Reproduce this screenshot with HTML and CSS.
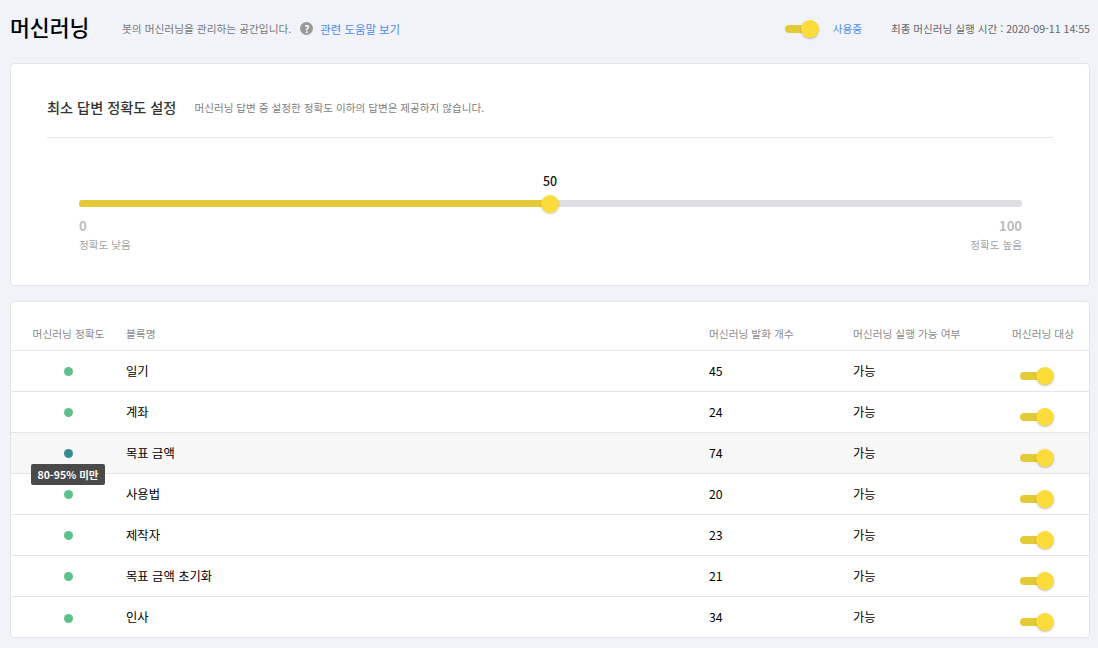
FILE: index.html
```html
<!DOCTYPE html>
<html lang="ko">
<head>
	<meta charset="UTF-8">
	<title>머신러닝</title>
	<link rel="stylesheet" href="styles.css">
</head>
<body>
	<div class="page">
		<div class="header">
			<h1 class="title">머신러닝</h1>
			<span class="desc">봇의 머신러닝을 관리하는 공간입니다.</span>
			<span class="help-icon">?</span>
			<a class="help-link">관련 도움말 보기</a>
			<div class="header-right">
				<span class="toggle"><span class="knob"></span></span>
				<a class="status">사용중</a>
				<span class="last-run">최종 머신러닝 실행 시간 : 2020-09-11 14:55</span>
			</div>
		</div>

		<div class="card setting">
			<div class="setting-head">
				<h2 class="setting-title">최소 답변 정확도 설정</h2>
				<span class="setting-desc">머신러닝 답변 중 설정한 정확도 이하의 답변은 제공하지 않습니다.</span>
			</div>
			<div class="slider-area">
				<div class="slider-value">50</div>
				<div class="slider">
					<div class="slider-fill"></div>
					<div class="slider-knob"></div>
				</div>
				<div class="slider-labels">
					<div>
						<div class="slider-num">0</div>
						<div class="slider-text">정확도 낮음</div>
					</div>
					<div class="right">
						<div class="slider-num">100</div>
						<div class="slider-text">정확도 높음</div>
					</div>
				</div>
			</div>
		</div>

		<div class="card list">
			<div class="row head">
				<div class="c-acc">머신러닝 정확도</div>
				<div>블록명</div>
				<div>머신러닝 발화 개수</div>
				<div>머신러닝 실행 가능 여부</div>
				<div class="c-target">머신러닝 대상</div>
			</div>
			<div class="row">
				<div class="c-acc"><span class="dot"></span></div>
				<div>일기</div>
				<div>45</div>
				<div>가능</div>
				<div class="c-target"><span class="toggle"><span class="knob"></span></span></div>
			</div>
			<div class="row">
				<div class="c-acc"><span class="dot"></span></div>
				<div>계좌</div>
				<div>24</div>
				<div>가능</div>
				<div class="c-target"><span class="toggle"><span class="knob"></span></span></div>
			</div>
			<div class="row hover">
				<div class="c-acc">
					<span class="dot dark"></span>
					<span class="tooltip">80-95% 미만</span>
				</div>
				<div>목표 금액</div>
				<div>74</div>
				<div>가능</div>
				<div class="c-target"><span class="toggle"><span class="knob"></span></span></div>
			</div>
			<div class="row">
				<div class="c-acc"><span class="dot"></span></div>
				<div>사용법</div>
				<div>20</div>
				<div>가능</div>
				<div class="c-target"><span class="toggle"><span class="knob"></span></span></div>
			</div>
			<div class="row">
				<div class="c-acc"><span class="dot"></span></div>
				<div>제작자</div>
				<div>23</div>
				<div>가능</div>
				<div class="c-target"><span class="toggle"><span class="knob"></span></span></div>
			</div>
			<div class="row">
				<div class="c-acc"><span class="dot"></span></div>
				<div>목표 금액 초기화</div>
				<div>21</div>
				<div>가능</div>
				<div class="c-target"><span class="toggle"><span class="knob"></span></span></div>
			</div>
			<div class="row last">
				<div class="c-acc"><span class="dot"></span></div>
				<div>인사</div>
				<div>34</div>
				<div>가능</div>
				<div class="c-target"><span class="toggle"><span class="knob"></span></span></div>
			</div>
		</div>
	</div>
</body>
</html>
```

FILE: styles.css
```css
*{
	box-sizing: border-box;
}

body{
	margin: 0;
	background-color: #f1f3f8;
	color: #1b1b1b;
	font-family: "Noto Sans CJK KR", "Noto Sans", sans-serif;
	overflow: hidden;
}

.page{
	padding: 0 8px 0 10px;
}

.header{
	display: flex;
	align-items: center;
	height: 63px;
	padding-bottom: 6px;
}

.title{
	width: 79px;
	margin: 0 33px 4px 0;
	font-size: 21.6px;
	font-weight: 500;
	color: #000;
	white-space: nowrap;
}

.desc{
	font-size: 10.7px;
	color: #777;
}

.help-icon{
	display: inline-block;
	width: 13px;
	height: 13px;
	margin: 0 7px 0 9px;
	border-radius: 50%;
	background-color: #999;
	color: #fff;
	font-size: 10px;
	font-weight: 700;
	line-height: 13px;
	text-align: center;
}

.help-link{
	font-size: 11.4px;
	color: #4d8af0;
}

.header-right{
	display: flex;
	align-items: center;
	margin-left: auto;
}

.status{
	margin: 0 29px 0 14px;
	font-size: 10.6px;
	color: #4d8af0;
}

.last-run{
	font-size: 10.6px;
	color: #666;
}

.toggle{
	position: relative;
	display: inline-block;
	width: 34px;
	height: 18px;
}

.toggle::before{
	content: "";
	position: absolute;
	left: 0;
	top: 5px;
	width: 30px;
	height: 8px;
	border-radius: 4px;
	background-color: #e3cb38;
}

.knob{
	position: absolute;
	right: 0;
	top: 0;
	width: 18px;
	height: 18px;
	border-radius: 50%;
	background-color: #fbdc3a;
	box-shadow: 0 1px 2px rgba(0,0,0,.25);
}

.card{
	width: 1080px;
	background-color: #fff;
	border: 1px solid #e3e5ea;
	border-radius: 4px;
}

.setting{
	height: 223px;
	padding: 0 36px;
	margin-bottom: 15px;
}

.setting-head{
	display: flex;
	align-items: center;
	height: 74px;
	padding-top: 13px;
	border-bottom: 1px solid #e4e4e4;
}

.setting-title{
	margin: 0 18px 0 0;
	font-size: 14.2px;
	font-weight: 500;
	color: #333;
}

.setting-desc{
	font-size: 10.6px;
	color: #808080;
}

.slider-area{
	padding: 0 31px 0 32px;
}

.slider-value{
	height: 20px;
	margin-top: 33px;
	padding-left: 464px;
	font-size: 12.4px;
	font-weight: 500;
	line-height: 20px;
	color: #111;
}

.slider{
	position: relative;
	height: 7px;
	margin-top: 9px;
	border-radius: 3px;
	background-color: #dfdfe1;
}

.slider-fill{
	width: 471px;
	height: 7px;
	border-radius: 3px;
	background-color: #e3cb38;
}

.slider-knob{
	position: absolute;
	left: 462px;
	top: -5px;
	width: 18px;
	height: 18px;
	border-radius: 50%;
	background-color: #fbdc3a;
	box-shadow: 0 1px 2px rgba(0,0,0,.2);
}

.slider-labels{
	display: flex;
	justify-content: space-between;
	margin-top: 9px;
}

.right{
	text-align: right;
}

.slider-num{
	height: 20px;
	font-size: 13px;
	font-weight: 700;
	line-height: 20px;
	color: #bcbcbc;
}

.slider-text{
	margin-top: 1px;
	font-size: 10.6px;
	line-height: 16px;
	color: #a3a3a3;
}

.list{
	height: 337px;
	padding-top: 17px;
}

.row{
	display: grid;
	grid-template-columns: 115px 583px 144px 1fr 100px;
	align-items: center;
	height: 41px;
	padding-bottom: 1px;
	border-bottom: 1px solid #e4e4e4;
	font-size: 12.3px;
	color: #000;
}

.row.head{
	height: 32px;
	padding-bottom: 3px;
	font-size: 10.7px;
	color: #8a8a8a;
}

.row.hover{
	background-color: #f7f7f7;
}

.row.last{
	border-bottom: 0;
}

.c-acc{
	position: relative;
	text-align: center;
}

.dot{
	display: block;
	width: 9px;
	height: 9px;
	margin: 2px 0 0 53px;
	border-radius: 50%;
	background-color: #5fc08a;
}

.dot.dark{
	background-color: #3a8a93;
}

.c-target{
	padding-right: 15px;
	text-align: right;
}

.row .c-target .toggle{
	top: 7px;
	margin-right: 20px;
}

.tooltip{
	position: absolute;
	left: 20px;
	top: 17px;
	width: 74px;
	height: 21px;
	border-radius: 2px;
	background-color: #4a4a4a;
	color: #fff;
	font-size: 10.5px;
	font-weight: 700;
	line-height: 21px;
	text-align: center;
	white-space: nowrap;
}
```
